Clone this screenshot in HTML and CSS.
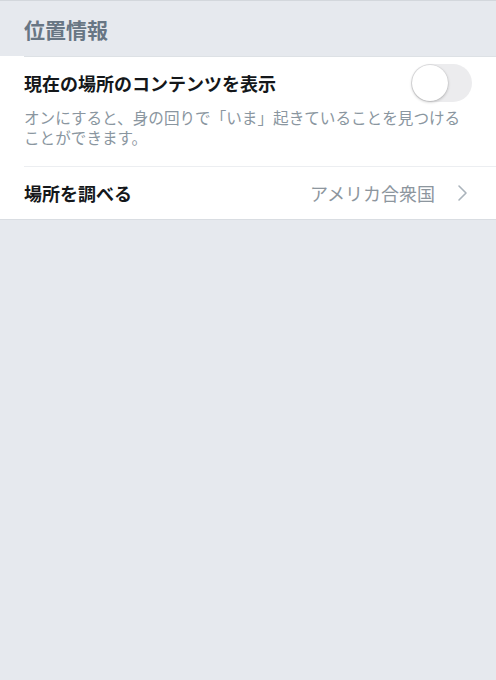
FILE: index.html
```html
<!DOCTYPE html>
<html lang="ja">
<head>
<meta charset="utf-8">
<link rel="stylesheet" href="styles.css">
</head>
<body>
<div class="page">
  <div class="section-header">位置情報</div>
  <div class="group">
    <div class="row row-toggle">
      <div class="row-top">
        <span class="row-title">現在の場所のコンテンツを表示</span>
        <span class="toggle"><span class="knob"></span></span>
      </div>
      <p class="row-desc">オンにすると、身の回りで「いま」起きていることを見つけることができます。</p>
    </div>
    <div class="row row-link">
      <span class="row-title">場所を調べる</span>
      <span class="row-value">アメリカ合衆国</span>
      <svg class="chev" width="12" height="18" viewBox="0 0 12 18"><polyline points="3,2 10,9 3,16" fill="none" stroke="#aab3bb" stroke-width="1.6" stroke-linecap="round" stroke-linejoin="round"/></svg>
    </div>
  </div>
</div>
</body>
</html>
```

FILE: styles.css
```css
html, body {
  margin: 0;
  padding: 0;
  background: #e6e9ee;
}
body {
  font-family: "Noto Sans CJK JP", "Noto Sans", sans-serif;
  width: 496px;
  height: 680px;
  overflow: hidden;
}
.page {
  border-top: 1px solid #d3d7dc;
}
.section-header {
  height: 55px;
  box-sizing: border-box;
  padding: 0 24px;
  display: flex;
  align-items: center;
  font-size: 21px;
  font-weight: 700;
  color: #687684;
}
.group {
  background: #fff;
  border-bottom: 1px solid #d9dde2;
  position: relative;
}
.group::before {
  content: "";
  display: block;
  height: 1px;
  margin-left: 24px;
  background: #dde1e5;
}
.row {
  padding: 0 24px;
}
.row-toggle {
  padding-top: 7px;
  padding-bottom: 19px;
  border-bottom: 1px solid #eceef1;
  margin-left: 24px;
  padding-left: 0;
}
.row-top {
  height: 38px;
  display: flex;
  align-items: center;
  justify-content: space-between;
}
.row-title {
  font-size: 18px;
  font-weight: 700;
  color: #14171a;
  line-height: 24px;
}
.toggle {
  width: 61px;
  height: 38px;
  border-radius: 19px;
  background: #ececee;
  position: relative;
  box-sizing: border-box;
}
.knob {
  position: absolute;
  left: 1px;
  top: 1px;
  width: 36px;
  height: 36px;
  border-radius: 50%;
  background: #fff;
  box-shadow: 0 1px 3px rgba(0,0,0,0.25), 0 0 0 0.5px rgba(0,0,0,0.08);
}
.row-desc {
  margin: 5px 0 0;
  font-size: 15.6px;
  line-height: 20px;
  color: #8a96a0;
}
.row-link {
  height: 52px;
  display: flex;
  align-items: center;
}
.row-link .row-title {
  flex: 1;
}
.row-value {
  font-size: 18px;
  color: #8d969e;
  margin-right: 21px;
}
.chev {
  display: block;
  margin-right: 4px;
}
```
